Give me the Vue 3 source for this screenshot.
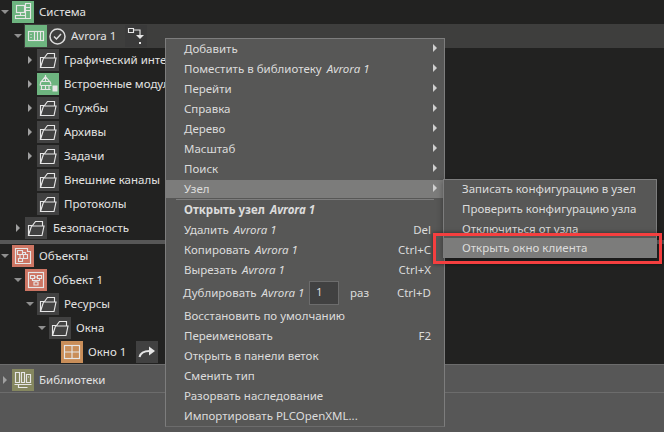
<script setup>
const topRows = [
  { level: 0, arrow: 'down', icon: 'system', tile: 'green', label: 'Система' },
  { level: 1, arrow: 'down', icon: 'node', tile: 'green', label: 'Avrora 1', selected: true },
  { level: 2, arrow: 'right', icon: 'folder', tile: 'gray', label: 'Графический интерфейс' },
  { level: 2, arrow: 'right', icon: 'module', tile: 'green', label: 'Встроенные модули' },
  { level: 2, arrow: 'right', icon: 'folder', tile: 'gray', label: 'Службы' },
  { level: 2, arrow: 'right', icon: 'folder', tile: 'gray', label: 'Архивы' },
  { level: 2, arrow: 'right', icon: 'folder', tile: 'gray', label: 'Задачи' },
  { level: 2, icon: 'folder', tile: 'gray', label: 'Внешние каналы' },
  { level: 2, icon: 'folder', tile: 'gray', label: 'Протоколы' },
  { level: 1, arrow: 'right', icon: 'folder', tile: 'gray', label: 'Безопасность' }
]

const objectRows = [
  { level: 0, arrow: 'down', icon: 'objects', tile: 'red', label: 'Объекты' },
  { level: 1, arrow: 'down', icon: 'object', tile: 'red', label: 'Объект 1' },
  { level: 2, arrow: 'down', icon: 'folder', tile: 'gray', label: 'Ресурсы' },
  { level: 3, arrow: 'down', icon: 'folder', tile: 'gray', label: 'Окна' },
  { level: 4, icon: 'window', tile: 'orange', label: 'Окно 1', link: true }
]

const libraryRow = { level: 0, arrow: 'right', icon: 'library', tile: 'olive', label: 'Библиотеки' }

const indent = [0, 13, 25, 37, 49]

const firstItems = [
  { label: 'Добавить', sub: true },
  { label: 'Поместить в библиотеку', em: 'Avrora 1', sub: true },
  { label: 'Перейти', sub: true },
  { label: 'Справка', sub: true },
  { label: 'Дерево', sub: true },
  { label: 'Масштаб', sub: true },
  { label: 'Поиск', sub: true },
  { label: 'Узел', sub: true, active: true }
]

const secondItems = [
  { label: 'Открыть узел', em: 'Avrora 1', bold: true },
  { label: 'Удалить', em: 'Avrora 1', key: 'Del' },
  { label: 'Копировать', em: 'Avrora 1', key: 'Ctrl+C' },
  { label: 'Вырезать', em: 'Avrora 1', key: 'Ctrl+X' }
]

const thirdItems = [
  { label: 'Восстановить по умолчанию' },
  { label: 'Переименовать', key: 'F2' },
  { label: 'Открыть в панели веток' },
  { label: 'Сменить тип' },
  { label: 'Разорвать наследование' },
  { label: 'Импортировать PLCOpenXML...' }
]

const nodeItems = [
  { label: 'Записать конфигурацию в узел' },
  { label: 'Проверить конфигурацию узла' },
  { label: 'Отключиться от узла' },
  { label: 'Открыть окно клиента', active: true }
]

const sections = [
  { name: 'top', rows: topRows },
  { name: 'objects', rows: objectRows },
  { name: 'library', rows: [libraryRow] }
]
</script>

<template>
  <div class="app">
    <section v-for="section in sections" :key="section.name" class="pane" :class="'pane-' + section.name">
      <div
        v-for="row in section.rows"
        :key="row.label"
        class="row"
        :style="{ paddingLeft: indent[row.level] + 'px' }"
      >
        <span class="slot"><i v-if="row.arrow" :class="'arrow-' + row.arrow"></i></span>
        <div class="row-body" :class="{ selected: row.selected }">
          <span class="tile" :class="row.tile">
            <svg viewBox="0 0 22 22" class="glyph">
              <g v-if="row.icon === 'system'">
                <rect x="4.5" y="4.5" width="8" height="7" />
                <path d="M8.5 11.5v3M3.5 14.5h10v3h-10zM13.5 2.5h5v15h-5zM13.5 6.5h5M13.500 9.500h5" />
              </g>
              <g v-else-if="row.icon === 'node'">
                <rect x="3.5" y="6.5" width="15" height="9" />
                <path d="M9.5 6.5v9M12.5 6.5v9M15.5 6.5v9M6 9v1M6 12v1" />
              </g>
              <path
                v-else-if="row.icon === 'folder'"
                d="M3.5 18.5v-10h4l3-4h7v4M3.5 18.5l3-9.500h12.500l-2 9.500z"
              />
              <g v-else-if="row.icon === 'module'">
                <path d="M8.500 3.500l4 5h-8zM8.500 2v6.500M4 8.500l-1 4M13 8.500l1 3M3.500 12.500h11M4.500 12.500v4M8.500 12.500v4M12 12.500v4M3.500 16.500h10" />
                <rect x="15.500" y="12.500" width="5" height="6" class="solid" />
              </g>
              <g v-else-if="row.icon === 'objects'">
                <path d="M3.500 3.500h12v3h3v12h-15z" />
                <path d="M5.500 5.500h5v4h-5zM11.500 9.500h4v4h-4zM6.500 13.500h4v3h-4zM8 9.500v4M10.500 7.500h3v2" />
              </g>
              <g v-else-if="row.icon === 'object'">
                <rect x="3.500" y="3.500" width="15" height="15" />
                <path d="M5.500 6.500h4v3h-4zM12.500 6.500h4v3h-4zM9 13h4v3h-4zM9.500 8h3M7.500 9.500v2h3.500v1.500M14.500 9.500v2h-3.500" />
              </g>
              <g v-else-if="row.icon === 'window'">
                <rect x="3.500" y="4.500" width="15" height="13" />
                <path d="M11 4.500v13M3.500 11h15" />
              </g>
              <g v-else-if="row.icon === 'library'">
                <path d="M3.500 3.500h4v10h-4zM9.500 3.500h3v10h-3zM14.500 5.500h4v8h-4zM2.500 15.500h17M6.500 15.500v3h9M16 8h1" />
              </g>
            </svg>
          </span>

          <svg v-if="row.selected" class="check" viewBox="0 0 17 17">
            <circle cx="8.500" cy="8.500" r="7.500" />
            <path d="M5 8.500l2.500 2.500 4.500-5" />
          </svg>

          <span class="row-label" :class="{ 'label-wide': row.level === 1 && !row.selected }">{{ row.label }}</span>

          <span v-if="row.selected" class="tile action action-tree">
            <svg viewBox="0 0 22 22" class="glyph">
              <path d="M3.500 3.500h5v4h-5zM8.500 5H15v5" />
              <path class="fill" d="M11 10h8l-4 4zM14 17h2v2h-2z" />
            </svg>
          </span>
          <span v-if="row.link" class="tile gray action">
            <svg viewBox="0 0 22 22" class="glyph">
              <path class="thick" d="M3.500 16c1-4 4-6 10-6" />
              <path class="fill" d="M13 5.500l6 4.500-6 4.500z" />
            </svg>
          </span>
        </div>
      </div>
    </section>
    <div class="pane-rest"></div>

    <div class="menu">
      <div
        v-for="item in firstItems"
        :key="item.label"
        class="menu-item"
        :class="{ active: item.active }"
      >
        <span>{{ item.label }} <em v-if="item.em">{{ item.em }}</em></span>
        <i class="arrow-sub"></i>
      </div>
      <div class="menu-line"></div>
      <div
        v-for="item in secondItems"
        :key="item.label"
        class="menu-item"
        :class="{ bold: item.bold }"
      >
        <span>{{ item.label }} <em>{{ item.em }}</em></span>
        <span class="menu-key">{{ item.key }}</span>
      </div>
      <div class="menu-item menu-dup">
        <span class="dup-label">Дублировать <em>Avrora 1</em></span>
        <span class="dup-input">1</span>
        <span class="dup-times">раз</span>
        <span class="menu-key">Ctrl+D</span>
      </div>
      <div v-for="item in thirdItems" :key="item.label" class="menu-item">
        <span>{{ item.label }}</span>
        <span class="menu-key">{{ item.key }}</span>
      </div>
    </div>

    <div class="submenu">
      <div
        v-for="item in nodeItems"
        :key="item.label"
        class="submenu-item"
        :class="{ active: item.active }"
      >
        {{ item.label }}
      </div>
    </div>

    <div class="callout"></div>
  </div>
</template>

<style scoped>
.app {
  position: relative;
  width: 664px;
  height: 432px;
  overflow: hidden;
  display: flex;
  flex-direction: column;
  background: #575757;
  color: #e2e2e2;
  font-family: "Noto Sans", "Open Sans", sans-serif;
  font-size: 11.5px;
}

.pane {
  flex: none;
  background: #222221;
}

.pane-top {
  height: 240px;
}

.pane-objects {
  height: 120px;
  margin-top: 4px;
  border-bottom: 1px solid #6c6c6c;
}

.pane-library {
  height: 24px;
  margin-top: 3px;
  background: #575757;
  border-bottom: 1px solid #6c6c6c;
}

.pane-rest {
  flex: 1;
}

.row {
  height: 24px;
  display: flex;
  align-items: center;
}

.slot {
  flex: none;
  width: 10px;
  margin-right: 2px;
  display: flex;
  justify-content: center;
}

.arrow-down {
  width: 0;
  height: 0;
  border-left: 4px solid transparent;
  border-right: 4px solid transparent;
  border-top: 4px solid #8f8f8f;
}

.arrow-right {
  width: 0;
  height: 0;
  border-top: 4px solid transparent;
  border-bottom: 4px solid transparent;
  border-left: 4px solid #a0a0a0;
}

.row-body {
  flex: 1;
  height: 24px;
  display: flex;
  align-items: center;
}

.row-body.selected {
  background: #3e3e3d;
  margin-left: -1px;
  padding-left: 1px;
}

.tile {
  flex: none;
  width: 22px;
  height: 22px;
  display: block;
}

.green {
  background: #6db47f;
}

.gray {
  background: #414141;
}

.red {
  background: #cd7563;
}

.orange {
  background: #c98e59;
}

.olive {
  background: #85875f;
}

.glyph {
  display: block;
  width: 22px;
  height: 22px;
  fill: none;
  stroke: #e6e6e6;
  stroke-width: 1.15;
}

.glyph .fill,
.glyph .solid {
  fill: #e6e6e6;
  stroke: none;
}

.glyph .thick {
  stroke-width: 2;
}

.check {
  flex: none;
  width: 17px;
  height: 17px;
  margin-left: 2px;
  fill: none;
  stroke: #dcdcdc;
  stroke-width: 1.500;
}

.row-label {
  max-width: 101px;
  margin-left: 5px;
  padding-bottom: 2px;
  overflow: hidden;
  white-space: nowrap;
}

.label-wide {
  margin-left: 6px;
}

.action {
  margin-left: 10px;
}

.action-tree {
  margin-left: 9px;
  background: #3a3a3a;
}

.menu {
  position: absolute;
  left: 165px;
  top: 38px;
  width: 280px;
  height: 389px;
  box-sizing: border-box;
  background: #575756;
  border: 1px solid #7d7d7d;
  border-bottom-color: #6c6c6c;
  color: #dcdcdc;
  z-index: 1;
}

.menu-item {
  height: 20px;
  box-sizing: border-box;
  padding: 0 13px 2px 18px;
  display: flex;
  align-items: center;
  justify-content: space-between;
  white-space: nowrap;
}

.menu-item em {
  font-style: italic;
  margin-left: 2px;
}

.menu-item.active {
  background: #7c7c7b;
  height: 18px;
  margin: 1px 0;
}

.menu-item.bold {
  font-weight: 700;
}

.arrow-sub {
  width: 0;
  height: 0;
  margin-right: -6px;
  border-top: 4px solid transparent;
  border-bottom: 4px solid transparent;
  border-left: 4px solid #cfcfcf;
}

.menu-line {
  height: 1px;
  margin: 0 10px;
  background: #7d7d7d;
}

.menu-key {
  color: #dcdcdc;
}

.menu-dup {
  height: 26px;
  padding-left: 17px;
  justify-content: flex-start;
}

.dup-label {
  flex: none;
  width: 121px;
}

.dup-input {
  align-self: flex-start;
  width: 30px;
  height: 24px;
  box-sizing: border-box;
  margin: 1px 0 0 5px;
  padding-left: 6px;
  line-height: 20px;
  background: #414141;
  border: 1px solid #6c6c6c;
}

.dup-times {
  margin-left: 11px;
}

.menu-dup .menu-key {
  margin-left: auto;
}

.submenu {
  position: absolute;
  left: 443px;
  top: 179px;
  width: 214px;
  height: 79px;
  box-sizing: border-box;
  background: #575756;
  border: 1px solid #7d7d7d;
  color: #dcdcdc;
  box-shadow: 0 2px 6px rgba(0, 0, 0, 0.35);
  z-index: 2;
}

.submenu-item {
  height: 20px;
  padding-left: 18px;
  line-height: 18px;
  white-space: nowrap;
}

.submenu-item.active {
  height: 19px;
  margin-top: -2px;
  line-height: 20px;
  background: #7c7c7b;
}

.callout {
  position: absolute;
  left: 433px;
  top: 233px;
  width: 229px;
  height: 31px;
  box-sizing: border-box;
  border: 3px solid #f53f3f;
  box-shadow: 0 0 4px rgba(0, 0, 0, 0.5);
  z-index: 3;
}
</style>
